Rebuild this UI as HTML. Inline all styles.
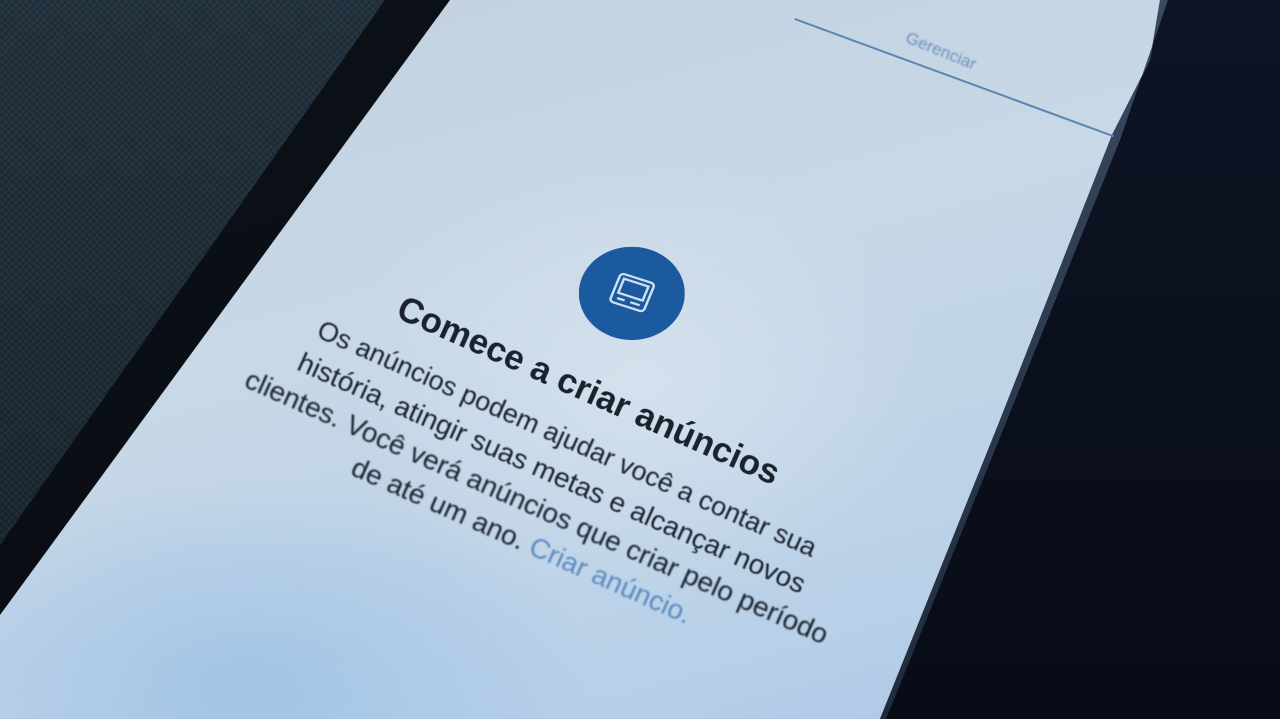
<!DOCTYPE html>
<html><head><meta charset="utf-8"><style>
html,body{margin:0;padding:0}
body{width:1280px;height:719px;overflow:hidden;position:relative;background:#0a0f1a;font-family:"Liberation Sans",sans-serif}
.bgl{position:absolute;inset:0;background:
 repeating-linear-gradient(45deg,rgba(255,255,255,0.03) 0 2px,transparent 2px 5px),
 repeating-linear-gradient(-45deg,rgba(0,0,0,0.15) 0 2px,transparent 2px 5px),
 linear-gradient(180deg,#22323e,#1c2a34 60%,#16212a);
 clip-path:polygon(0 0,400px 0,0 560px)}
.bgr{position:absolute;inset:0;background:linear-gradient(180deg,#0d1424,#080c16);clip-path:polygon(1165px 0,1280px 0,1280px 719px,880px 719px,1000px 420px)}
.bezel{position:absolute;inset:0;background:linear-gradient(160deg,#0c1118,#070a10);clip-path:polygon(385px 0,450px 0,0 615px,0 545px)}
.screen{position:absolute;inset:0;
 background:
 radial-gradient(ellipse 420px 320px at 640px 380px,rgba(214,226,238,0.9),rgba(214,226,238,0) 70%),
 radial-gradient(ellipse 500px 300px at 250px 690px,rgba(160,194,230,0.9),rgba(160,194,230,0) 70%),
 linear-gradient(165deg,#c2d0de 0%,#c8d8e6 40%,#b8d0e8 80%,#a9c6e6 100%);
 clip-path:polygon(450px 0,1160px 0,1150px 60px,1112px 135px,1000px 420px,880px 719px,0 719px,0 615px)}
.edge{position:absolute;inset:0;background:linear-gradient(180deg,#3a4a60,#202a3c);clip-path:polygon(1160px 0,1168px 0,1120px 140px,1005px 425px,886px 719px,880px 719px,1000px 420px,1112px 135px,1150px 60px)}
.hdr{position:absolute;left:795px;top:18px;width:340px;height:2px;background:#5a86b4;transform-origin:0 0;transform:rotate(20.2deg)}
.ger{position:absolute;left:910px;top:28px;font-size:17px;color:#6e93bb;transform-origin:0 0;transform:rotate(22deg);filter:blur(0.8px)}
.blk{position:absolute;left:223px;top:230px;width:720px;height:346px;transform:rotate(24deg);text-align:center;color:#1a222e}
.ic{position:absolute;left:307px;top:0;width:106px;height:106px}
.t{position:absolute;left:0;right:0;top:140px;line-height:40px;font-size:35px;font-weight:bold;filter:blur(0.3px)}
.l{position:absolute;left:0;right:0;line-height:37px;white-space:nowrap}
a{color:#5b8cc0;text-decoration:none}
</style></head><body>
<div class="bgl"></div>
<div class="bgr"></div>
<div class="bezel"></div>
<div class="screen"></div>
<div class="edge"></div>
<div class="hdr"></div>
<div class="ger">Gerenciar</div>
<div class="blk">
 <svg class="ic" viewBox="0 0 106 106" style="transform:rotate(-24deg) scale(1,0.88)">
  <circle cx="53" cy="53" r="53" fill="#1c5aa0"/>
  <g transform="rotate(20 53 53)" fill="none" stroke="#cfe0f2" stroke-width="2.5">
   <rect x="35" y="35" width="36" height="34" rx="4"/>
   <rect x="40" y="40" width="26" height="17"/>
   <line x1="41" y1="63" x2="49" y2="63"/><line x1="55" y1="63" x2="65" y2="63"/>
  </g>
 </svg>
 <div class="t">Comece a criar anúncios</div>
 <div class="l" style="top:194px;font-size:27px;filter:blur(0.4px)">Os anúncios podem ajudar você a contar sua</div>
 <div class="l" style="top:231px;font-size:28px;filter:blur(0.5px)">história, atingir suas metas e alcançar novos</div>
 <div class="l" style="top:268px;font-size:28px;filter:blur(0.8px)">clientes. Você verá anúncios que criar pelo período</div>
 <div class="l" style="top:305px;font-size:28px;filter:blur(0.8px)">de até um ano. <a>Criar anúncio.</a></div>
</div>
</body></html>
